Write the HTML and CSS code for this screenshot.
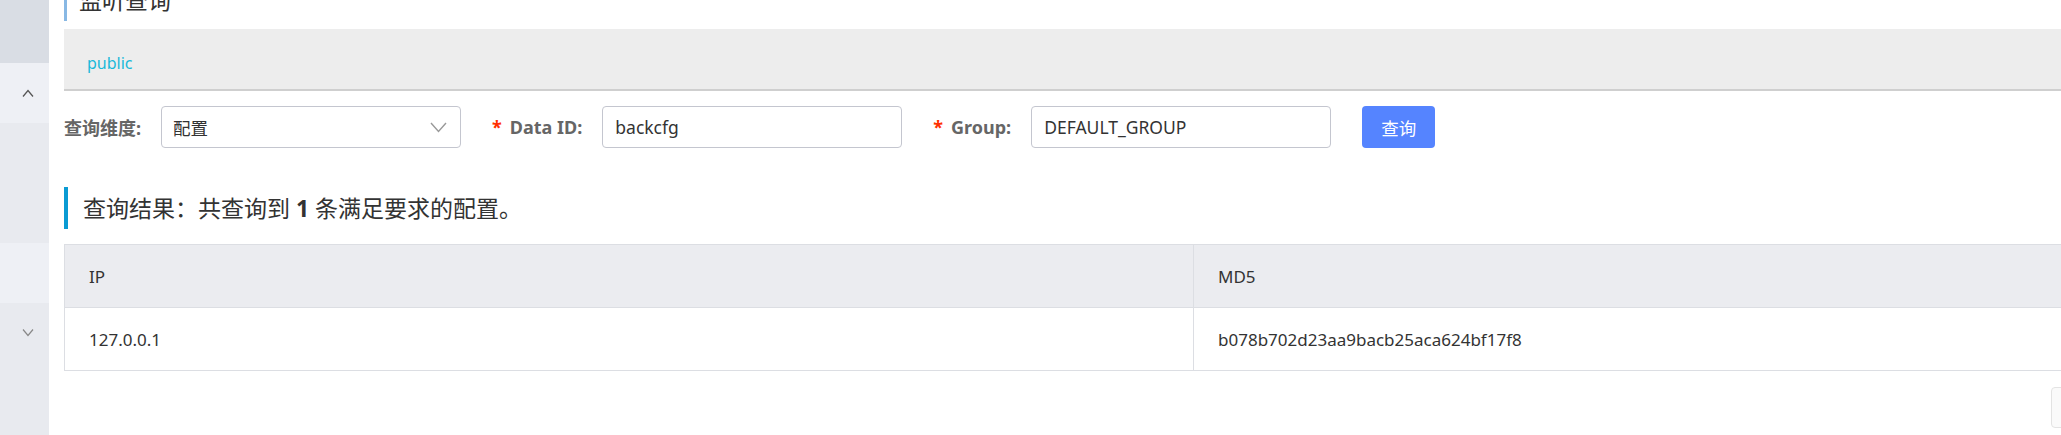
FILE: index.html
```html
<!DOCTYPE html>
<html lang="zh-CN">
<head>
<meta charset="utf-8">
<title>监听查询</title>
<link rel="stylesheet" href="styles.css">
</head>
<body>
<div class="app">
  <aside class="sidebar">
    <div class="sb-block sb-top"></div>
    <div class="sb-block sb-light sb-toggle">
      <svg class="sb-chevron" width="12" height="8" viewBox="0 0 12 8"><path d="M1 7.5 L6 1.5 L11 7.5" fill="none" stroke="#555" stroke-width="1.3"/></svg>
    </div>
    <div class="sb-block sb-mid"></div>
    <div class="sb-block sb-light"></div>
    <div class="sb-block sb-rest">
      <div class="sb-toggle">
        <svg class="sb-chevron" width="12" height="8" viewBox="0 0 12 8"><path d="M1 0.5 L6 6.5 L11 0.5" fill="none" stroke="#888" stroke-width="1.2"/></svg>
      </div>
    </div>
  </aside>
  <main class="main">
    <h1 class="page-title">监听查询</h1>
    <div class="ns-bar"><span class="ns-link">public</span></div>
    <form class="query-form">
      <div class="form-item">
        <label class="form-label">查询维度:</label>
        <div class="select-box">
          <span class="select-value">配置</span>
          <svg class="select-arrow" width="17" height="11" viewBox="0 0 17 11"><path d="M1 1 L8.5 9.5 L16 1" fill="none" stroke="#999" stroke-width="1.4"/></svg>
        </div>
      </div>
      <div class="form-item">
        <label class="form-label"><span class="req">*</span>Data ID:</label>
        <input class="text-input" type="text" value="backcfg">
      </div>
      <div class="form-item">
        <label class="form-label"><span class="req">*</span>Group:</label>
        <input class="text-input" type="text" value="DEFAULT_GROUP">
      </div>
      <button class="btn-primary" type="button">查询</button>
    </form>
    <h2 class="result-title">查询结果：共查询到 <strong>1</strong> 条满足要求的配置。</h2>
    <table class="result-table">
      <colgroup><col class="col-ip"><col></colgroup>
      <thead>
        <tr><th>IP</th><th>MD5</th></tr>
      </thead>
      <tbody>
        <tr><td>127.0.0.1</td><td>b078b702d23aa9bacb25aca624bf17f8</td></tr>
      </tbody>
    </table>
  </main>
  <div class="float-box"></div>
</div>
</body>
</html>
```
FILE: styles.css
```css
* { box-sizing: border-box; }

html, body {
  margin: 0;
  padding: 0;
  width: 2061px;
  height: 435px;
  overflow: hidden;
  background: #fff;
  font-family: "Noto Sans", "Noto Sans CJK SC", sans-serif;
  color: #333;
}

.app {
  display: flex;
  height: 435px;
}

.sidebar {
  width: 49px;
  flex: 0 0 49px;
  display: flex;
  flex-direction: column;
  background: #e8eaef;
}

.sb-block { width: 100%; }
.sb-top { height: 63px; background: #d9dde4; }
.sb-light { height: 60px; background: #eef0f5; }
.sb-mid { height: 120px; background: #e8eaef; }
.sb-rest { flex: 1; background: #e8eaef; }

.sb-toggle {
  height: 60px;
  display: flex;
  align-items: center;
  justify-content: center;
  padding-left: 6px;
}

.sb-chevron { display: block; }

.main {
  flex: 1;
  min-width: 0;
  padding-left: 15px;
  margin-top: -20px;
  overflow: hidden;
}

.page-title {
  margin: 0;
  height: 41px;
  line-height: 41px;
  font-size: 23px;
  font-weight: normal;
  color: #333;
  border-left: 3px solid #88b8e4;
  padding-left: 12px;
}

.ns-bar {
  margin-top: 8px;
  height: 62px;
  background: #ededed;
  border-bottom: 2px solid #cfcfcf;
  padding: 23px 0 0 23px;
  line-height: 22px;
}

.ns-link {
  font-size: 16px;
  color: #1ab9d9;
}

.query-form {
  margin-top: 15px;
  display: flex;
  align-items: center;
  height: 42px;
}

.form-item {
  display: flex;
  align-items: center;
  margin-right: 31px;
}

.form-label {
  font-size: 18px;
  font-weight: bold;
  color: #666;
  margin-right: 20px;
  white-space: nowrap;
}

.req {
  color: #ff3000;
  margin-right: 8px;
}

.select-box {
  width: 300px;
  height: 42px;
  border: 1px solid #c4c6cf;
  border-radius: 4px;
  display: flex;
  align-items: center;
  justify-content: space-between;
  padding: 0 13px 0 11px;
  background: #fff;
}

.select-value {
  font-size: 17.5px;
  color: #333;
}

.select-arrow { display: block; }

.text-input {
  width: 300px;
  height: 42px;
  border: 1px solid #c4c6cf;
  border-radius: 4px;
  padding: 0 12px;
  font-family: inherit;
  font-size: 17.5px;
  color: #333;
  background: #fff;
  outline: none;
}

.btn-primary {
  width: 73px;
  height: 42px;
  border: none;
  border-radius: 4px;
  background: #5584ff;
  color: #fff;
  font-family: inherit;
  font-size: 17.5px;
  padding: 0;
}

.result-title {
  margin: 39px 0 0;
  height: 42px;
  line-height: 42px;
  font-size: 23px;
  font-weight: normal;
  color: #333;
  border-left: 4px solid #0a9bd3;
  padding-left: 15px;
}

.result-title strong { font-weight: bold; }

.result-table {
  margin-top: 15px;
  width: calc(100% + 4px);
  border-collapse: collapse;
  table-layout: fixed;
}

.col-ip { width: 1129px; }

.result-table th,
.result-table td {
  height: 63px;
  border: 1px solid #dcdee3;
  padding: 0 24px;
  text-align: left;
  font-weight: normal;
  font-size: 17px;
  color: #333;
}

.result-table th { background: #ebecf0; }

.float-box {
  position: fixed;
  left: 2051px;
  top: 387px;
  width: 40px;
  height: 41px;
  border: 1px solid #e3e3e3;
  border-radius: 4px;
  background: #fafafa;
}
```
